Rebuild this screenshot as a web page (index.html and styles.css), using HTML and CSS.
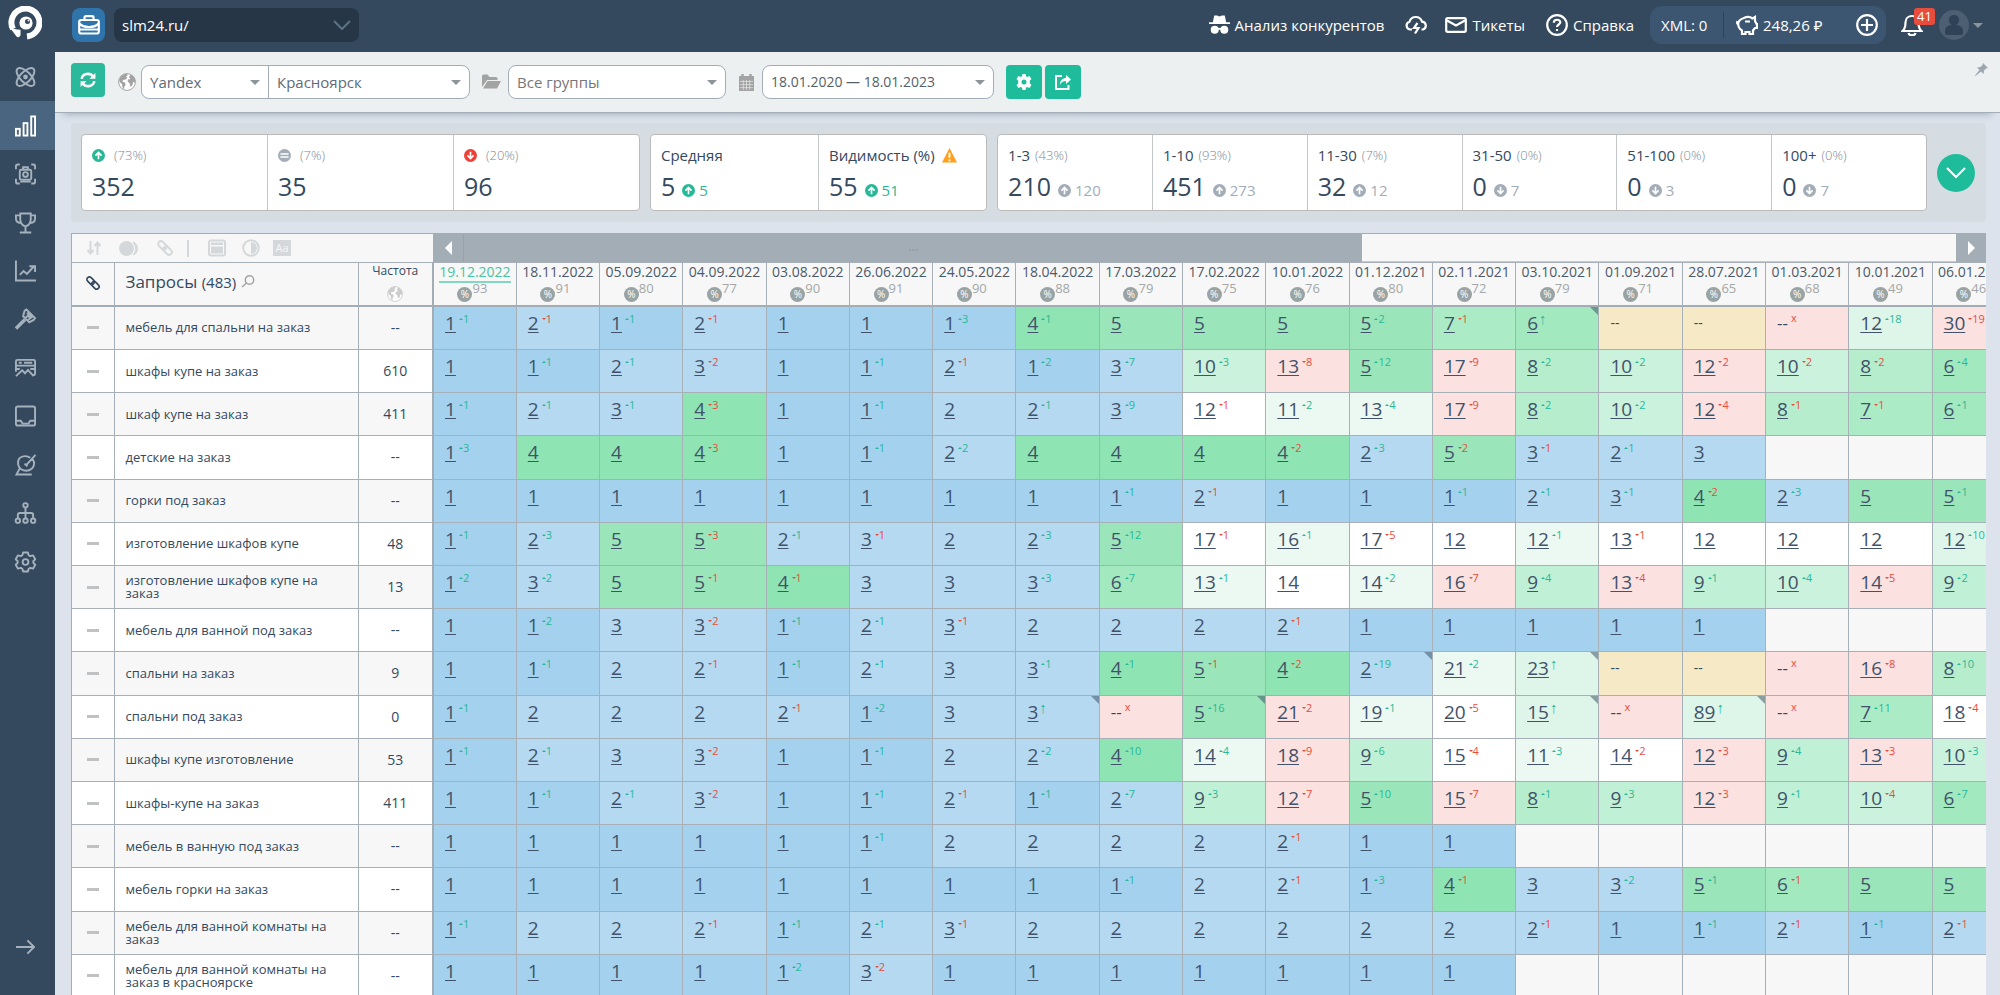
FILE: index.html
```html
<!DOCTYPE html>
<html lang="ru">
<head>
<meta charset="utf-8">
<title>Позиции — slm24.ru</title>
<link rel="stylesheet" href="styles.css">
</head>
<body>
<svg class="sprite" aria-hidden="true">
  <symbol id="i-up" viewBox="0 0 14 14"><circle cx="7" cy="7" r="7" fill="currentColor"/><path d="M7 11V4M3.7 7.2 7 3.8l3.3 3.4" fill="none" stroke="#fff" stroke-width="1.8"/></symbol>
  <symbol id="i-down" viewBox="0 0 14 14"><circle cx="7" cy="7" r="7" fill="currentColor"/><path d="M7 3v7M3.7 6.8 7 10.2l3.3-3.4" fill="none" stroke="#fff" stroke-width="1.8"/></symbol>
  <symbol id="i-same" viewBox="0 0 14 14"><circle cx="7" cy="7" r="7" fill="currentColor"/><path d="M2.6 5.5h8.8M2.6 8.7h8.8" fill="none" stroke="#fff" stroke-width="1.6"/></symbol>
  <symbol id="i-globe" viewBox="0 0 18 18"><circle cx="9" cy="9" r="8.4" fill="#fff" stroke="currentColor"/><path d="M1.2 6.5C2.4 3 5.5.9 8.4.8L10 2 8 3.6l1.3 1.2L7.6 6.600 5 7l-.6 1.600 2.400 1 1 2-1.400 1.800L6 16.400 4.400 14 4 11 1.600 9zM11 4l1.600-2.400c2.600.9 4.600 3.300 4.900 6.400L16.400 10l-1-1.400-1.200 4-1.600 1.400L11.400 10 9.600 8.600 10 6.500 12.400 6z" fill="currentColor"/></symbol>
  <symbol id="i-link" viewBox="0 0 18 18"><g fill="none" stroke="currentColor" stroke-width="1.900" transform="rotate(45 9 9)"><rect x=".5" y="6.200" width="9.500" height="5.600" rx="2.800"/><rect x="8" y="6.200" width="9.500" height="5.600" rx="2.800"/></g></symbol>
</svg>

<div class="app">
  <aside class="side">
    <a class="logo" href="#" aria-label="Главная"><svg viewBox="0 0 34 34"><path d="M5 23A14 14 0 1 1 19 30.500" fill="none" stroke="#fff" stroke-width="6"/><path d="M2.500 22.500c3 .2 5 1 10 1.200v5.500c-1.500 2.600-3 2.400-4 1.200z" fill="#fff"/><circle cx="18" cy="17" r="6.600" fill="#fff"/><circle cx="19.500" cy="15.500" r="2.500" fill="#34495e"/><circle cx="20.500" cy="14.500" r=".9" fill="#fff"/></svg></a>
    <nav class="menu">
      <a href="#" aria-label="Проекты"><svg viewBox="0 0 22 22"><ellipse cx="11" cy="11" rx="12" ry="5.500" transform="rotate(45 11 11)"/><ellipse cx="11" cy="11" rx="12" ry="5.500" transform="rotate(-45 11 11)"/><circle cx="11" cy="11" r="1.500" fill="currentColor"/></svg></a>
      <a class="on" href="#" aria-label="Позиции"><svg viewBox="0 0 22 22"><rect x="1" y="14" width="4" height="7"/><rect x="9" y="8" width="4" height="13"/><rect x="17" y="1" width="4" height="20"/></svg></a>
      <a href="#" aria-label="Снимки"><svg viewBox="0 0 22 22"><path d="M1 6V3q0-2 2-2h2M17 1h2q2 0 2 2v3M21 16v3q0 2-2 2h-2M5 21H3q-2 0-2-2v-3"/><rect x="5" y="6.500" width="12" height="10.500" rx="1.500"/><path d="M8.500 6V4h5v2M5.500 19h11"/><circle cx="11" cy="11.500" r="2.500"/></svg></a>
      <a href="#" aria-label="Конкуренты"><svg viewBox="0 0 22 22"><path d="M5.500 1h11v6c0 4-2 6.500-5.500 7.500C7.500 13.500 5.500 11 5.500 7zM5.500 3H1v3c0 3 2 5 5 5M16.500 3H21v3c0 3-2 5-5 5M11 14.500V21M5 21h12"/></svg></a>
      <a href="#" aria-label="Динамика"><svg viewBox="0 0 22 22"><path d="M1 0v21h21M5 15l4-4 3.500 3L20 6M15 6h6v6"/></svg></a>
      <a href="#" aria-label="Аудит"><svg viewBox="0 0 22 22"><path d="m10 2.500 2-1.500 9 9-1.500 2-4.500 2.500-6.500-6.500zM12.500 4.500l5.500 5.500M10.500 10.500l3-3 2.500 2.500-3 3"/><path d="m10.500 11.500-9.500 9.500" stroke-width="3.600"/></svg></a>
      <a href="#" aria-label="Сниппеты"><svg viewBox="0 0 22 22"><path d="M1 15V4q0-1.500 1.500-1.500h17Q21 2.500 21 4v12.500q0 2-2 2M1 8.500h20M4 5.500h3M9.500 5.500H18M1 19.500l6.500-6 3 3 3-3.500 6 6.500M16 12h5M1 12h4"/></svg></a>
      <a href="#" aria-label="Входящие"><svg viewBox="0 0 22 22"><rect x="1" y="1" width="20" height="20" rx="2"/><path d="M1 16h5l2 3h6l2-3h5"/></svg></a>
      <a href="#" aria-label="Радар"><svg viewBox="0 0 22 22"><path d="M16 3.500C13 1 7.500 1 4.500 4c-2.500 4-1.500 9 2 11.500 3.500 2 8 1.800 11-.5 3-3 3-7 1-10M11.500 11.500 21.500.5M5 14.500 1.500 21H17.500M10 9.500l3 3"/></svg></a>
      <a href="#" aria-label="Структура"><svg viewBox="0 0 22 22"><circle cx="11" cy="3" r="2.300"/><circle cx="3" cy="19" r="2.300"/><circle cx="11" cy="19" r="2.300"/><circle cx="19" cy="19" r="2.300"/><path d="M11 5.300v11.400M3 16.700V13q0-2 2-2h12q2 0 2 2v3.700"/></svg></a>
      <a href="#" aria-label="Настройки"><svg viewBox="0 0 22 22"><path d="M8.500 1h5l.8 2.900 1.700 1 3-.8 2.200 4-2 2v1.800l2 2-2.200 4-3-.8-1.700 1-.8 2.900h-5l-.8-2.900-1.700-1-3 .8-2.200-4 2-2v-1.800l-2-2 2.200-4 3 .8 1.700-1z" stroke-linejoin="round"/><circle cx="11" cy="11" r="3"/></svg></a>
    </nav>
    <button class="expand" aria-label="Развернуть меню"><svg viewBox="0 0 20 16"><path d="M0 8h18M12 1l7 7-7 7"/></svg></button>
  </aside>

  <div class="page">
    <header class="top">
      <button class="case" aria-label="Проекты"><svg viewBox="0 0 22 20"><rect x="1.200" y="5" width="19.600" height="13.500" rx="2"/><path d="M6.500 5V2.500Q6.500 1.200 8 1.200h6q1.500 0 1.500 1.300V5M1.500 8.500Q4 12 11 12t9.500-3.500M1.500 14.500h19"/></svg></button>
      <span class="pick project"><select aria-label="Проект"><option>slm24.ru/</option></select><svg viewBox="0 0 18 10"><path d="m1 1 8 8 8-8"/></svg></span>
      <nav class="links">
        <a href="#"><svg class="spy" viewBox="0 0 22 20"><path d="M5.500 0h3L11 1l2.500-1h3L18 7h4v2H0V7h4z"/><circle cx="6" cy="15" r="4.200"/><circle cx="16" cy="15" r="4.200"/><path d="M9 13h4v2H9z"/></svg>Анализ конкурентов</a>
        <a class="cloud" href="#" aria-label="Апдейты"><svg class="line" viewBox="0 0 22 18"><path d="M7 13.500H5a4 4 0 0 1-.5-7.800 6.500 6.500 0 0 1 12.500 0 4 4 0 0 1 1 7.800h-1.500"/><path d="m12.500 7-3.500 5h4.500L10 17.500"/></svg></a>
        <a href="#"><svg class="line mail" viewBox="0 0 22 16"><rect x="1.200" y="1.200" width="19.600" height="13.600" rx="1.500"/><path d="m2 3.500 9 5 9-5"/></svg>Тикеты</a>
        <a class="help" href="#"><svg class="line" viewBox="0 0 22 22"><circle cx="11" cy="11" r="9.800"/><path d="M7.800 8.800c0-4 6.500-4 6.500-.5 0 2.200-3.300 2.200-3.300 4.700M11 15v2"/></svg>Справка</a>
      </nav>
      <div class="wallet">
        <span class="xml">XML: 0</span>
        <span class="money"><svg class="line" viewBox="0 0 22 20"><path d="M8 3c3-1.500 6.500-1 8.500.5L19 2v4l1.500 3H21v4h-2l-2 2.500V19h-3.500v-2h-4v2H6v-3.500C3.500 14 2.200 11.500 2.200 9S4.500 4 8 3M1.500 6C.8 8 1 9 2.500 9.500M9 6.500h5"/></svg>248,26 ₽</span>
        <button aria-label="Пополнить"><svg class="line" viewBox="0 0 22 22"><circle cx="11" cy="11" r="9.800"/><path d="M11 5v12M5 11h12"/></svg></button>
      </div>
      <button class="bell" aria-label="Уведомления"><svg class="line" viewBox="0 0 22 22"><path d="M1.500 17h19c-2.500-2-3-4-3-8.500C17.500 4.500 14.500 2 11 2S4.500 4.500 4.500 8.500C4.500 13 4 15 1.500 17zM7.500 19c.5 3 6.500 3 7 0"/></svg><span class="badge">41</span></button>
      <button class="user" aria-label="Профиль"><svg viewBox="0 0 30 30"><circle cx="15" cy="15" r="15" fill="#4d5f72"/><circle cx="15" cy="10" r="5.200" fill="#2f4257"/><path d="M6 21c0-5 4-6 9-6s9 1 9 6v2q0 2-2 2H8q-2 0-2-2z" fill="#2f4257"/></svg><i class="tri"></i></button>
    </header>

    <section class="filters">
      <button class="green refresh" aria-label="Обновить"><svg viewBox="0 0 14 14"><path d="M1.500 6C2 1.500 8.500 0 11.500 4M12.500 8C12 12.500 5.500 14 2.500 10" fill="none" stroke="#fff" stroke-width="2.200"/><path d="M13.500.8V6H8.300zM.5 13.200V8h5.200z" fill="#fff"/></svg></button>
      <svg class="ico globe"><use href="#i-globe"/></svg>
      <div class="pair">
        <span class="pick engine"><select aria-label="Поисковая система"><option>Yandex</option></select><i class="tri"></i></span>
        <span class="pick region"><select aria-label="Регион"><option>Красноярск</option></select><i class="tri"></i></span>
      </div>
      <svg class="ico folder" viewBox="0 0 19 16"><path d="M0 13V2q0-1.500 1.500-1.500h4L7.500 3H14q1.500 0 1.500 1.500V6H5z"/><path d="M5.500 7H19l-4 7.500H1z"/></svg>
      <span class="pick boxed group"><select aria-label="Группа"><option>Все группы</option></select><i class="tri"></i></span>
      <svg class="ico cal" viewBox="0 0 15 17"><path d="M0 2h15v15H0z"/><path d="M3.500 0v4M11.500 0v4" stroke="#a3a3a3" stroke-width="2.500"/><path d="M1 7.500h13M1 10.600h13M1 13.600h13M4.300 6v10M7.500 6v10M10.700 6v10" stroke="#ecf0f1" stroke-width=".6"/></svg>
      <span class="pick boxed period"><select aria-label="Период"><option>18.01.2020 — 18.01.2023</option></select><i class="tri"></i></span>
      <div class="acts">
        <button class="green" aria-label="Настройки"><svg viewBox="0 0 16 16"><path fill-rule="evenodd" d="M6.500 0h3l.5 2.300 1.300.7L13.500 2 15.500 5l-1.700 1.600v2.800L15.500 11l-2 3-2.200-1-1.300.7-.5 2.300h-3L6 13.700 4.700 13l-2.200 1-2-3 1.700-1.600V6.600L.5 5l2-3 2.200 1L6 2.300zM8 5.500a2.500 2.500 0 1 0 0 5 2.500 2.500 0 0 0 0-5z" fill="#fff"/></svg></button>
        <button class="green" aria-label="Поделиться"><svg viewBox="0 0 16 16"><path d="M7 2H1v13h12.500v-4" fill="none" stroke="#fff" stroke-width="2"/><path d="M5 11c0-5 3-7 6-7V1l5 4.500L11 10V7C8 7 6 8.500 5 11z" fill="#fff"/></svg></button>
      </div>
      <button class="pin" aria-label="Закрепить"><svg viewBox="0 0 13 13"><path d="M8 0l5 5-2 .5-2 2L8.500 11 6 8.500.5 13 0 12.500 4.500 7 2 4.500 5.500 4l2-2z"/></svg></button>
    </section>

    <main>
      <section class="stats">
        <div class="card c3">
          <div><p><svg class="mk g"><use href="#i-up"/></svg><small>(73%)</small></p><b>352</b></div>
          <div><p><svg class="mk n"><use href="#i-same"/></svg><small>(7%)</small></p><b>35</b></div>
          <div><p><svg class="mk r"><use href="#i-down"/></svg><small>(20%)</small></p><b>96</b></div>
        </div>
        <div class="card c2">
          <div><p>Средняя</p><b>5</b><span class="g"><svg><use href="#i-up"/></svg>5</span></div>
          <div><p>Видимость (%)<svg class="warn" viewBox="0 0 16 16"><path d="M8 0l8 15.500H0z" fill="#ff9f1e"/><path d="M8 5v5.500M8 12v2" stroke="#fff" stroke-width="2"/></svg></p><b>55</b><span class="g"><svg><use href="#i-up"/></svg>51</span></div>
        </div>
        <div class="card c6">
          <div><p>1-3<small>(43%)</small></p><b>210</b><span><svg><use href="#i-up"/></svg>120</span></div>
          <div><p>1-10<small>(93%)</small></p><b>451</b><span><svg><use href="#i-up"/></svg>273</span></div>
          <div><p>11-30<small>(7%)</small></p><b>32</b><span><svg><use href="#i-up"/></svg>12</span></div>
          <div><p>31-50<small>(0%)</small></p><b>0</b><span><svg><use href="#i-down"/></svg>7</span></div>
          <div><p>51-100<small>(0%)</small></p><b>0</b><span><svg><use href="#i-down"/></svg>3</span></div>
          <div><p>100+<small>(0%)</small></p><b>0</b><span><svg><use href="#i-down"/></svg>7</span></div>
        </div>
        <button class="more" aria-label="Показать график"><svg viewBox="0 0 20 12"><path d="m1 1 9 9 9-9"/></svg></button>
      </section>

      <section class="board">
        <div class="bar">
          <div class="tools">
            <button aria-label="Сортировка"><svg viewBox="0 0 14 14"><path d="M3.500 0v12M.5 9l3 3.500 3-3.500M10.500 14V2M7.500 5l3-3.500 3 3.500" fill="none" stroke="currentColor" stroke-width="2"/></svg></button>
            <button aria-label="Сравнение"><svg class="w21" viewBox="0 0 21 15"><circle cx="7.500" cy="7.500" r="7.500" fill="currentColor"/><path d="M14 1c6 1 6 12 0 13 3.500-4 3.500-9 0-13z" fill="currentColor" stroke="currentColor"/></svg></button>
            <button aria-label="Ссылки"><svg class="w18"><use href="#i-link"/></svg></button>
            <span class="sep"></span>
            <button aria-label="Таблица"><svg class="w18" viewBox="0 0 18 17"><rect x="1" y="1" width="16" height="15" rx="2" fill="none" stroke="currentColor" stroke-width="2"/><path d="M3 3h12v2.500H3zM3 7h12v7H3z" fill="currentColor"/></svg></button>
            <button aria-label="Контраст"><svg class="w18" viewBox="0 0 18 18"><circle cx="9" cy="9" r="7.800" fill="none" stroke="currentColor" stroke-width="2"/><path d="M9 3a6 6 0 0 1 0 12z" fill="currentColor"/></svg></button>
            <button class="aa" aria-label="Подписи">Aa</button>
          </div>
          <div class="scroll">
            <button aria-label="Влево"><i class="left"></i></button>
            <span class="thumb">...</span>
            <span class="track"></span>
            <button class="r" aria-label="Вправо"><i class="right"></i></button>
          </div>
        </div>
        <table class="grid">
          <colgroup><col class="k1"><col class="k2"><col class="k3"></colgroup>
          <thead><tr id="head">
            <th><svg class="chain"><use href="#i-link"/></svg></th>
            <th class="q">Запросы <span>(483)</span><svg class="find" viewBox="0 0 14 13"><circle cx="8.500" cy="5" r="4.200"/><path d="M5.500 8 1 12"/></svg></th>
            <th class="f">Частота<svg><use href="#i-globe"/></svg></th>
          </tr></thead>
          <tbody id="rows"></tbody>
        </table>
      </section>
    </main>
  </div>
</div>
<script src="grid.js"></script>
</body>
</html>
```

FILE: styles.css
```css
* { box-sizing: border-box; }
body { margin: 0; height: 100vh; overflow: hidden; font: 14px/20px "Open Sans", "Noto Sans", sans-serif; color: #34495e; background: #dce3ec; }
a { color: inherit; text-decoration: none; }
button { padding: 0; border: 0; background: none; font: inherit; color: inherit; display: flex; align-items: center; justify-content: center; cursor: pointer; }
p { margin: 0; }
.sprite { position: absolute; width: 0; height: 0; }
.app { display: flex; height: 100vh; }

.side { width: 55px; flex: none; background: #34495e; color: #a5b1bc; display: flex; flex-direction: column; }
.side svg { fill: none; stroke: currentColor; stroke-width: 2; }
.logo { height: 53px; padding: 6px 8px; flex: none; }
.logo svg { width: 34px; height: 34px; stroke: none; }
.menu { display: grid; grid-auto-rows: 1fr; height: 533px; }
.menu a { display: flex; align-items: center; padding-left: 15px; }
.menu svg { width: 21px; height: 22px; overflow: visible; }
.menu .on { background: #4a6580; color: #fff; }
.expand { margin-top: auto; height: 97px; padding-right: 4px; }
.expand svg { width: 19px; height: 16px; }

.page { flex: 1; min-width: 0; display: flex; flex-direction: column; }
.top { height: 52px; flex: none; background: #34495e; color: #fff; display: flex; align-items: center; padding: 0 17px 2px 17px; font-size: 15px; }
.line { fill: none; stroke: #fff; stroke-width: 2.2; width: 22px; height: 22px; }
.case { width: 33px; height: 34px; border-radius: 8px; background: #2f75ab; margin-right: 9px; }
.case svg { width: 22px; height: 20px; fill: none; stroke: #fff; stroke-width: 2.2; }
.pick { position: relative; display: flex; align-items: center; }
.pick select { appearance: none; border: 0; background: none; font: inherit; color: inherit; width: 100%; height: 100%; padding: 0 8px; margin: 0; }
.pick .tri, .pick svg { position: absolute; right: 8px; pointer-events: none; }
.tri { border: 5px solid transparent; border-top-color: #8b9499; border-bottom: 0; }
.project { width: 245px; height: 34px; border-radius: 8px; background: #263646; }
.project svg { width: 18px; height: 10px; fill: none; stroke: #5b7388; stroke-width: 2; }
.links { margin-left: auto; display: flex; align-items: center; }
.links a { display: flex; align-items: center; gap: 5px; margin-right: 21px; }
.links .help { margin-right: 16px; }
.links .cloud { margin-right: 18px; }
.spy { width: 21px; height: 20px; fill: #fff; }
.wallet { width: 236px; height: 38px; border-radius: 12px; background: #3c5671; display: flex; align-items: center; padding: 0 8px 0 11px; }
.xml { width: 63px; line-height: 26px; border-right: 1px solid #2f4358; }
.money { display: flex; align-items: center; gap: 5px; margin-left: 12px; flex: 1; }
.bell { position: relative; margin-left: 15px; width: 22px; height: 24px; }
.badge { position: absolute; left: 13px; top: -5px; width: 21px; height: 17px; border-radius: 3px; background: #e74c3c; font-size: 13px; line-height: 17px; }
.user { margin-left: 16px; gap: 4px; }
.user svg { width: 30px; height: 30px; }

.filters { height: 61px; flex: none; background: #ecf0f1; border-bottom: 1px solid #a3adb8; box-shadow: 0 8px 8px -8px #8f9dac; display: flex; align-items: center; padding: 0 10px 0 16px; }
.green { background: #1fbc9c; border-radius: 4px; width: 36px; height: 34px; }
.green svg { width: 16px; height: 16px; }
.refresh { width: 34px; background: #2ab99a; margin-bottom: 4px; }
.ico { fill: #a3a3a3; color: #a3a3a3; flex: none; }
.globe { width: 18px; height: 18px; margin: 0 5px 0 13px; }
.folder { width: 19px; height: 16px; margin: 0 7px 0 12px; }
.cal { width: 15px; height: 17px; margin: 0 8px 0 13px; }
.pair, .boxed { height: 34px; border: 1px solid #a3adb8; border-radius: 8px; background: #fff; display: flex; color: #5f6b76; }
.pair { width: 329px; }
.engine { width: 127px; border-right: 1px solid #a3adb8; font-size: 15px; }
.region { flex: 1; font-size: 15px; }
.group { width: 218px; font-size: 15px; color: #777; }
.period { width: 232px; color: #555f69; }
.acts { display: flex; gap: 3px; margin-left: 12px; }
.pin { margin: 0 2px 26px auto; }
.pin svg { width: 13px; height: 13px; fill: #9aa7b3; }

main { flex: 1; min-height: 0; padding: 10px 14px 0 16px; }
.stats { display: flex; gap: 10px; align-items: center; padding: 11px 11px 11px 10px; background: #d6dde2; border-radius: 4px; }
.card { display: flex; height: 77px; border: 1px solid #bbb; border-radius: 4px; background: #fff; }
.card > div { flex: 1; padding: 9px 0 0 10px; border-left: 1px solid #c3c6c9; white-space: nowrap; }
.card > div:first-child { border-left: 0; }
.c3 { flex: 560; } .c2 { flex: 337; } .c6 { flex: 933; }
.card p { display: flex; align-items: center; height: 22px; font-weight: 500; font-size: 15px; }
.card small { font-size: 13px; font-weight: 300; color: #7d8a97; margin-left: 5px; }
.card b { font-size: 25px; line-height: 40px; font-weight: 500; }
.card span { color: #a3adb8; font-size: 15px; margin-left: 7px; }
.card svg { width: 13px; height: 13px; color: #a3adb8; }
.card span svg { vertical-align: -1px; margin-right: 4px; }
.card .mk { margin-right: 4px; }
.card .g, .card .g svg, .card .mk.g { color: #27b898; }
.card .r { color: #ee4036; }
.card .warn { width: 15px; height: 15px; margin-left: 7px; }
.more { width: 38px; height: 38px; flex: none; border-radius: 50%; background: #1fbc9c; }
.more svg { width: 20px; height: 12px; fill: none; stroke: #fff; stroke-width: 2; }

.board { margin-top: 11px; overflow: hidden; border-left: 1px solid #a3adb5; }
.bar { display: flex; height: 29px; border-top: 1px solid #a3adb5; background: #f7f7f7; }
.tools { width: 361px; display: flex; align-items: center; padding-left: 15px; color: #d5d8da; gap: 16px; }
.tools svg { width: 14px; height: 14px; }
.tools .w21 { width: 21px; height: 15px; margin-left: 2px; }
.tools .w18 { width: 18px; height: 18px; }
.sep { width: 2px; height: 17px; background: #d5d8da; margin: 0 3px 0 -3px; }
.tools button + button.aa { margin-left: -3px; }
.aa { width: 18px; height: 16px; background: #d5d8da; color: #f7f7f7; font-size: 11px; }
.scroll { flex: 1; display: flex; }
.scroll button { width: 31px; background: #a3adb5; border-right: 1px solid #98a2aa; }
.scroll .r { width: 30px; border-right: 0; }
.scroll i { border: 7px solid transparent; }
.left { border-right-color: #fff !important; border-left: 0 !important; }
.right { border-left-color: #fff !important; border-right: 0 !important; }
.thumb { flex: 898; background: #a3adb5; text-align: center; color: #8a959f; font-size: 13px; line-height: 24px; }
.track { flex: 594; border-bottom: 1px solid #c5cbd0; }

.grid { width: calc(100% + 30px); height: 736px; table-layout: fixed; border-collapse: collapse; }
.k1 { width: 42px; } .k2 { width: 244px; } .k3 { width: 75px; }
.grid th, .grid td { border: 1px solid #a7b0b7; border-left: 0; padding: 0; }
.grid th { height: 43px; background: #f7f7f7; border-bottom: 2px solid #a3adb5; font-weight: 400; line-height: 16px; padding-bottom: 2px; }
.grid th:nth-child(3), .grid td:nth-child(3) { border-right: 2px solid #a3adb5; }
.grid .q { text-align: left; padding-left: 11px; padding-bottom: 4px; font-size: 17px; font-weight: 500; }
.q span { font-size: 15px; }
.find { width: 14px; height: 13px; margin-left: 5px; fill: none; stroke: #a3a3a3; stroke-width: 1.5; }
.chain { width: 16px; height: 16px; vertical-align: middle; }
.grid .f { font-size: 12px; }
.f svg { display: block; width: 16px; height: 16px; margin: 7px auto 0; color: #ccc; }
.grid .date { font-size: 14px; color: #4b5a69; padding-bottom: 1px; }
.date a.now { color: #48c3a4; border-bottom: 2px solid #7fd8c0; }
.pc { display: flex; justify-content: center; align-items: flex-end; height: 22px; padding-right: 5px; color: #a3a7a7; }
.pc i { width: 15px; height: 15px; border-radius: 50%; background: #99a3a3; color: #fff; font: 10px/15px "Open Sans", sans-serif; }
.pc sup { font-size: 13px; line-height: 16px; align-self: flex-start; }

tbody tr:nth-child(odd) { background: #f7f7f7; }
tbody tr:nth-child(even) { background: #fff; }
tbody td:nth-child(1), tbody td:nth-child(3) { text-align: center; }
.dash { display: block; width: 12px; height: 3px; margin: 0 auto; background: #bfc1c3; }
.grid .name { font-size: 13px; line-height: 13px; padding: 0 24px 0 11px; }
.grid .pos { vertical-align: top; padding: 4px 0 0 11px; position: relative; white-space: nowrap; }
.pos a { font-size: 19px; line-height: 24px; color: #41526a; text-decoration: underline; text-decoration-thickness: 1px; text-decoration-skip-ink: none; text-underline-offset: 2px; }
.pos .no { font-size: 17px; line-height: 24px; }
.pos .none { font-size: 14px; line-height: 24px; }
.pos sup { font-size: 11px; line-height: 10px; vertical-align: 7px; margin-left: 3px; color: #27b898; }
.pos sup.dn, .pos sup.x { color: #e74c3c; }
.pos sup.new { font-size: 15px; margin-left: 1px; vertical-align: 6px; }
.up::before, .dn::before { content: ""; display: inline-block; border: 2px solid transparent; vertical-align: 3px; }
.up::before { border-top: 0; border-bottom-color: currentColor; }
.dn::before { border-bottom: 0; border-top-color: currentColor; }
.corner::after { content: ""; position: absolute; right: 0; top: 0; border: 4px solid transparent; border-top-color: #34495e; border-right-color: #34495e; opacity: .5; }
.p1 { background: #a4d1ee; } .p2, .p3 { background: #b5d9f1; }
.p4 { background: #8fe4b4; } .p5 { background: #9ae6ba; } .p6 { background: #a3e9c0; }
.p7 { background: #abecc6; } .p8 { background: #b6eecd; } .p9 { background: #c0f0d5; } .p10 { background: #caf2dc; }
.rise { background: #def5e9; } .grow { background: #ecf9f2; } .flat { background: #fff; }
.fall { background: #fbe1e0; } .lost { background: #f5e9c6; } .void { background: #f7f7f7; }
```

FILE: grid.js
```js
const dates = [
  ['19.12.2022', 93], ['18.11.2022', 91], ['05.09.2022', 80], ['04.09.2022', 77], ['03.08.2022', 90],
  ['26.06.2022', 91], ['24.05.2022', 90], ['18.04.2022', 88], ['17.03.2022', 79], ['17.02.2022', 75],
  ['10.01.2022', 76], ['01.12.2021', 80], ['02.11.2021', 72], ['03.10.2021', 79], ['01.09.2021', 71],
  ['28.07.2021', 65], ['01.03.2021', 68], ['10.01.2021', 49], ['06.01.2021', 46]
];

// Position, then +n (rise), -n (drop) or n (new); ^ marks a changed page, "--" no data, "x" dropped out, "." not checked
const rows = [
  ['мебель для спальни на заказ', '--', '1+1 2-1 1+1 2-1 1 1 1+3 4+1 5 5 5 5+2 7-1 6n^ -- -- x 12+18 30-19'],
  ['шкафы купе на заказ', '610', '1 1+1 2+1 3-2 1 1+1 2-1 1+2 3+7 10+3 13-8 5+12 17-9 8+2 10+2 12-2 10-2 8-2 6+4'],
  ['шкаф купе на заказ', '411', '1+1 2+1 3+1 4-3 1 1+1 2 2+1 3+9 12-1 11+2 13+4 17-9 8+2 10+2 12-4 8-1 7-1 6+1'],
  ['детские на заказ', '--', '1+3 4 4 4-3 1 1+1 2+2 4 4 4 4-2 2+3 5-2 3-1 2+1 3 . . .'],
  ['горки под заказ', '--', '1 1 1 1 1 1 1 1 1+1 2-1 1 1 1+1 2+1 3+1 4-2 2+3 5 5+1'],
  ['изготовление шкафов купе', '48', '1+1 2+3 5 5-3 2+1 3-1 2 2+3 5+12 17-1 16+1 17-5 12 12+1 13-1 12 12 12 12+10'],
  ['изготовление шкафов купе на заказ', '13', '1+2 3+2 5 5-1 4-1 3 3 3+3 6+7 13+1 14 14+2 16-7 9+4 13-4 9+1 10+4 14-5 9+2'],
  ['мебель для ванной под заказ', '--', '1 1+2 3 3-2 1+1 2+1 3-1 2 2 2 2-1 1 1 1 1 1 . . .'],
  ['спальни на заказ', '9', '1 1+1 2 2-1 1+1 2+1 3 3+1 4+1 5-1 4-2 2+19^ 21+2 23n^ -- -- x 16-8 8+10'],
  ['спальни под заказ', '0', '1+1 2 2 2 2-1 1+2 3 3n^ x 5+16^ 21-2 19+1 20-5 15n^ x 89n^ x 7+11 18-4'],
  ['шкафы купе изготовление', '53', '1+1 2+1 3 3-2 1 1+1 2 2+2 4+10 14+4 18-9 9+6 15-4 11+3 14-2 12-3 9+4 13-3 10+3'],
  ['шкафы-купе на заказ', '411', '1 1+1 2+1 3-2 1 1+1 2-1 1+1 2+7 9+3 12-7 5+10 15-7 8+1 9+3 12-3 9+1 10-4 6+7'],
  ['мебель в ванную под заказ', '--', '1 1 1 1 1 1+1 2 2 2 2 2-1 1 1 . . . . . .'],
  ['мебель горки на заказ', '--', '1 1 1 1 1 1 1 1 1+1 2 2-1 1+3 4-1 3 3+2 5+1 6-1 5 5'],
  ['мебель для ванной комнаты на заказ', '--', '1+1 2 2 2-1 1+1 2+1 3-1 2 2 2 2 2 2 2-1 1 1+1 2-1 1+1 2-1'],
  ['мебель для ванной комнаты на заказ в красноярске', '--', '1 1 1 1 1+2 3-2 1 1 1 1 1 1 1 . . . . . .']
];

function cell(code) {
  if (code === '.') return '<td class="pos void"></td>';
  if (code === '--') return '<td class="pos lost"><span class="none">--</span></td>';
  if (code === 'x') return '<td class="pos fall"><span class="no">--</span><sup class="x">x</sup></td>';
  const [, num, sign, diff, mark] = code.match(/^(\d+)([+\-n]?)(\d*)(\^?)$/);
  const value = Number(num);
  const before = sign === '+' ? value + Number(diff) : value - Number(diff);
  const moved = sign === 'n' || Math.ceil(before / 10) !== Math.ceil(value / 10);
  let tone = 'p' + value;
  if (value > 10) {
    if (!sign) tone = 'flat';
    else if (sign === '-') tone = moved ? 'fall' : 'flat';
    else tone = moved ? 'rise' : 'grow';
  }
  const sup = sign === 'n' ? '<sup class="new">↑</sup>' : sign ? `<sup class="${sign === '+' ? 'up' : 'dn'}">${diff}</sup>` : '';
  return `<td class="pos ${tone}${mark ? ' corner' : ''}"><a href="#">${num}</a>${sup}</td>`;
}

document.getElementById('head').insertAdjacentHTML('beforeend', dates.map(([d, p], i) =>
  `<th class="date"><a href="#"${i ? '' : ' class="now"'}>${d}</a><div class="pc"><i>%</i><sup>${p}</sup></div></th>`).join(''));

document.getElementById('rows').innerHTML = rows.map(([name, freq, cells]) =>
  `<tr><td><span class="dash"></span></td><td class="name">${name}</td><td>${freq}</td>${cells.split(' ').map(cell).join('')}</tr>`).join('');
```
